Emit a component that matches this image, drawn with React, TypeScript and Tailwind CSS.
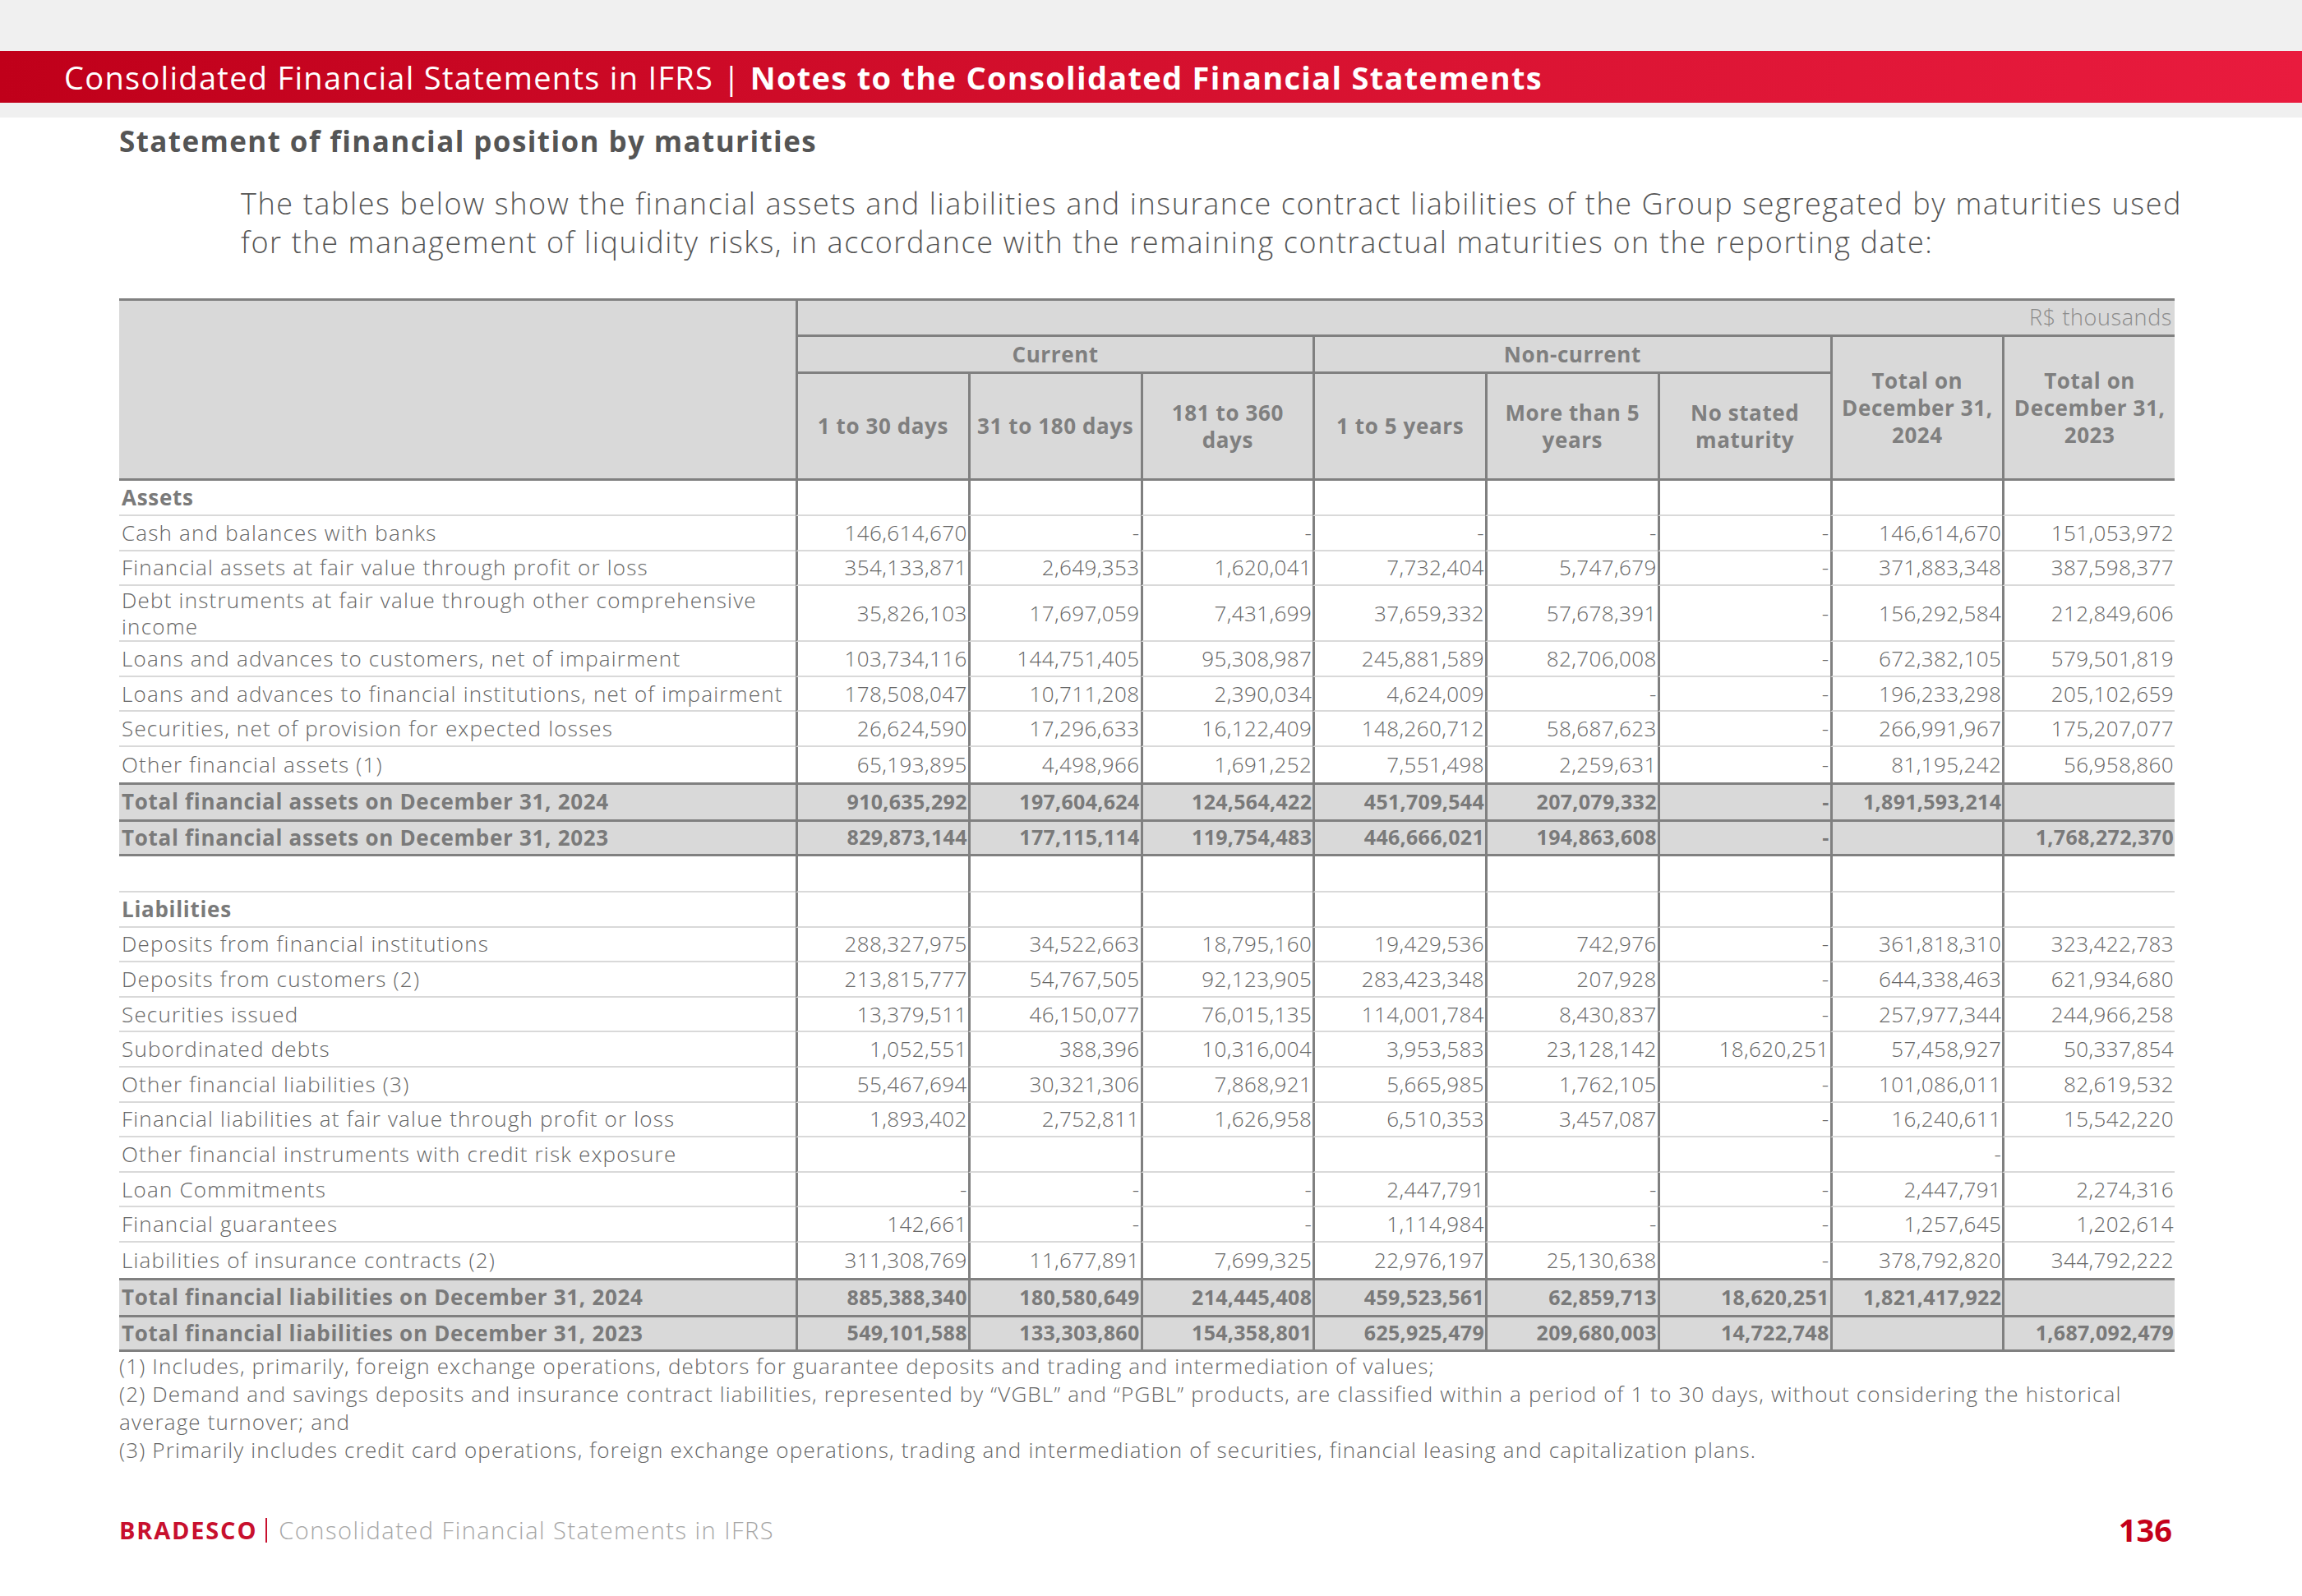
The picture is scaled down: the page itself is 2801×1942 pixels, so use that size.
const cols = "grid grid-cols-[823px_repeat(8,209.75px)]";

type Line = { label: string; values: string[] };

const assets: Line[] = [
  { label: "Cash and balances with banks", values: ["146,614,670", "-", "-", "-", "-", "-", "146,614,670", "151,053,972"] },
  { label: "Financial assets at fair value through profit or loss", values: ["354,133,871", "2,649,353", "1,620,041", "7,732,404", "5,747,679", "-", "371,883,348", "387,598,377"] },
];

const assetsRest: Line[] = [
  { label: "Loans and advances to customers, net of impairment", values: ["103,734,116", "144,751,405", "95,308,987", "245,881,589", "82,706,008", "-", "672,382,105", "579,501,819"] },
  { label: "Loans and advances to financial institutions, net of impairment", values: ["178,508,047", "10,711,208", "2,390,034", "4,624,009", "-", "-", "196,233,298", "205,102,659"] },
  { label: "Securities, net of provision for expected losses", values: ["26,624,590", "17,296,633", "16,122,409", "148,260,712", "58,687,623", "-", "266,991,967", "175,207,077"] },
  { label: "Other financial assets (1)", values: ["65,193,895", "4,498,966", "1,691,252", "7,551,498", "2,259,631", "-", "81,195,242", "56,958,860"] },
];

const liabilities: Line[] = [
  { label: "Deposits from financial institutions", values: ["288,327,975", "34,522,663", "18,795,160", "19,429,536", "742,976", "-", "361,818,310", "323,422,783"] },
  { label: "Deposits from customers (2)", values: ["213,815,777", "54,767,505", "92,123,905", "283,423,348", "207,928", "-", "644,338,463", "621,934,680"] },
  { label: "Securities issued", values: ["13,379,511", "46,150,077", "76,015,135", "114,001,784", "8,430,837", "-", "257,977,344", "244,966,258"] },
  { label: "Subordinated debts", values: ["1,052,551", "388,396", "10,316,004", "3,953,583", "23,128,142", "18,620,251", "57,458,927", "50,337,854"] },
  { label: "Other financial liabilities (3)", values: ["55,467,694", "30,321,306", "7,868,921", "5,665,985", "1,762,105", "-", "101,086,011", "82,619,532"] },
  { label: "Financial liabilities at fair value through profit or loss", values: ["1,893,402", "2,752,811", "1,626,958", "6,510,353", "3,457,087", "-", "16,240,611", "15,542,220"] },
  { label: "Other financial instruments with credit risk exposure", values: ["", "", "", "", "", "", "-", ""] },
  { label: "Loan Commitments", values: ["-", "-", "-", "2,447,791", "-", "-", "2,447,791", "2,274,316"] },
  { label: "Financial guarantees", values: ["142,661", "-", "-", "1,114,984", "-", "-", "1,257,645", "1,202,614"] },
  { label: "Liabilities of insurance contracts (2)", values: ["311,308,769", "11,677,891", "7,699,325", "22,976,197", "25,130,638", "-", "378,792,820", "344,792,222"] },
];

const assetTotals: Line[] = [
  { label: "Total financial assets on December 31, 2024", values: ["910,635,292", "197,604,624", "124,564,422", "451,709,544", "207,079,332", "-", "1,891,593,214", ""] },
  { label: "Total financial assets on December 31, 2023", values: ["829,873,144", "177,115,114", "119,754,483", "446,666,021", "194,863,608", "-", "", "1,768,272,370"] },
];

const liabilityTotals: Line[] = [
  { label: "Total financial liabilities on December 31, 2024", values: ["885,388,340", "180,580,649", "214,445,408", "459,523,561", "62,859,713", "18,620,251", "1,821,417,922", ""] },
  { label: "Total financial liabilities on December 31, 2023", values: ["549,101,588", "133,303,860", "154,358,801", "625,925,479", "209,680,003", "14,722,748", "", "1,687,092,479"] },
];

const numCell = "flex items-center justify-end pr-[1px] border-l-[3px] border-l-[#808080]";
const labelText = "text-[26px] tracking-[1.2px]";
const numText = "text-[26px] tracking-[0.4px]";

function BodyRow({ line, last }: { line: Line; last?: boolean }) {
  const line2 = last ? "" : "border-b-2 border-b-[#d9d9d9]";
  return (
    <div className={`${cols} h-[42.6px]`}>
      <div className={`flex items-center pl-[3px] whitespace-nowrap ${labelText} ${line2}`}>{line.label}</div>
      {line.values.map((v, i) => (
        <div key={i} className={`${numCell} ${numText} ${line2}`}>{v}</div>
      ))}
    </div>
  );
}

function SectionRow({ label }: { label: string }) {
  return (
    <div className={`${cols} h-[43px]`}>
      <div className="flex items-center pl-[3px] font-bold text-[26px] tracking-[0.7px] text-[#7a7a7a] border-b-2 border-b-[#d9d9d9]">{label}</div>
      {Array.from({ length: 8 }).map((_, i) => (
        <div key={i} className={`${numCell} border-b-2 border-b-[#d9d9d9]`} />
      ))}
    </div>
  );
}

function TotalRows({ rows }: { rows: Line[] }) {
  return (
    <div className="bg-[#d9d9d9] font-bold text-[#7a7a7a] border-t-[3px] border-t-[#808080]">
      {rows.map((r, idx) => (
        <div key={idx} className={`${cols} ${idx === 0 ? "h-[45px]" : "h-[42px]"} border-b-[3px] border-b-[#808080]`}>
          <div className="flex items-center pl-[3px] whitespace-nowrap text-[26px] tracking-[0.7px]">{r.label}</div>
          {r.values.map((v, i) => (
            <div key={i} className={`${numCell} text-[25px] tracking-[0.3px]`}>{v}</div>
          ))}
        </div>
      ))}
    </div>
  );
}

function TableHead() {
  const th = "flex items-center justify-center text-center border-l-[3px] border-l-[#808080] border-b-[3px] border-b-[#808080] leading-[33px] whitespace-nowrap";
  return (
    <div className={`${cols} grid-rows-[47px_45px_130px] bg-[#d9d9d9] font-bold text-[26px] tracking-[0.6px] text-[#7f7f7f]`}>
      <div className="row-span-3 border-t-[3px] border-t-[#808080] border-b-[3px] border-b-[#808080]" />
      <div className="col-span-8 flex items-center justify-end pr-[3px] border-t-[3px] border-t-[#808080] border-l-[3px] border-l-[#808080] border-b-[3px] border-b-[#808080] font-light text-[27px] text-[#8c8c8c]">
        R$ thousands
      </div>
      <div className={`col-span-3 ${th}`}>Current</div>
      <div className={`col-span-3 ${th}`}>Non-current</div>
      <div className={`row-span-2 ${th}`}>
        <span>Total on<br />December 31,<br />2024</span>
      </div>
      <div className={`row-span-2 ${th}`}>
        <span>Total on<br />December 31,<br />2023</span>
      </div>
      <div className={th}>1 to 30 days</div>
      <div className={th}>31 to 180 days</div>
      <div className={th}><span>181 to 360<br />days</span></div>
      <div className={th}>1 to 5 years</div>
      <div className={th}><span>More than 5<br />years</span></div>
      <div className={th}><span>No stated<br />maturity</span></div>
    </div>
  );
}

function BlankRow() {
  return (
    <div className={`${cols} h-[44px]`}>
      <div className="border-b-2 border-b-[#d9d9d9]" />
      {Array.from({ length: 8 }).map((_, i) => (
        <div key={i} className={`${numCell} border-b-2 border-b-[#d9d9d9]`} />
      ))}
    </div>
  );
}

export default function App() {
  const debt = ["35,826,103", "17,697,059", "7,431,699", "37,659,332", "57,678,391", "-", "156,292,584", "212,849,606"];
  return (
    <div className="w-[2801px] h-[1942px] bg-white font-['Open_Sans',sans-serif] text-[#666666] overflow-hidden">
      {/* top band */}
      <div className="bg-[#f0f0f0] pt-[62px] pb-[18px]">
        <div className="h-[63px] flex items-center pl-[78px] bg-gradient-to-r from-[#c0001a] via-[#d5102e] to-[#e91b3e] text-white text-[38px] tracking-[1.3px] leading-none">
          <span className="font-normal">Consolidated Financial Statements in IFRS |&nbsp;</span>
          <span className="font-bold">Notes to the Consolidated Financial Statements</span>
        </div>
      </div>

      <div className="pl-[145px]">
        <h1 className="mt-[9px] text-[35px] tracking-[1.4px] leading-[40px] font-bold text-[#555555]">Statement of financial position by maturities</h1>

        <p className="mt-[33px] ml-[148px] text-[36px] tracking-[1.6px] leading-[46.5px] font-light text-[#555555] whitespace-nowrap">
          The tables below show the financial assets and liabilities and insurance contract liabilities of the Group segregated by maturities used
          <br />
          for the management of liquidity risks, in accordance with the remaining contractual maturities on the reporting date:
        </p>

        <div className="mt-[45px] w-[2501px] font-light">
          <TableHead />

          <SectionRow label="Assets" />
          {assets.map((l, i) => (
            <BodyRow key={i} line={l} />
          ))}
          <div className={`${cols} h-[68px]`}>
            <div className={`flex items-center pl-[3px] leading-[32px] whitespace-nowrap ${labelText} border-b-2 border-b-[#d9d9d9]`}>
              <span>Debt instruments at fair value through other comprehensive<br />income</span>
            </div>
            {debt.map((v, i) => (
              <div key={i} className={`${numCell} ${numText} border-b-2 border-b-[#d9d9d9]`}>{v}</div>
            ))}
          </div>
          {assetsRest.map((l, i) => (
            <BodyRow key={i} line={l} last={i === assetsRest.length - 1} />
          ))}
          <TotalRows rows={assetTotals} />

          <BlankRow />
          <SectionRow label="Liabilities" />
          {liabilities.map((l, i) => (
            <BodyRow key={i} line={l} last={i === liabilities.length - 1} />
          ))}
          <TotalRows rows={liabilityTotals} />
        </div>

        <div className="w-[2501px] text-[26px] tracking-[1.15px] leading-[34px] font-light text-[#666666]">
          <p>(1) Includes, primarily, foreign exchange operations, debtors for guarantee deposits and trading and intermediation of values;</p>
          <p>
            <span className="whitespace-nowrap">(2) Demand and savings deposits and insurance contract liabilities, represented by “VGBL” and “PGBL” products, are classified within a period of 1 to 30 days, without considering the historical</span>
            <br />
            average turnover; and
          </p>
          <p>(3) Primarily includes credit card operations, foreign exchange operations, trading and intermediation of securities, financial leasing and capitalization plans.</p>
        </div>

        <div className="mt-[61px] w-[2498px] flex items-center justify-between h-[40px]">
          <div className="flex items-center text-[29px]">
            <span className="font-bold tracking-[1.8px] text-[#c8102e]">BRADESCO</span>
            <span className="ml-[10px] mr-[14px] w-[2px] h-[30px] bg-[#c8102e]" />
            <span className="font-light tracking-[1.5px] text-[#a6a6a6]">Consolidated Financial Statements in IFRS</span>
          </div>
          <span className="text-[38px] font-bold text-[#c4001a]">136</span>
        </div>
      </div>
    </div>
  );
}
